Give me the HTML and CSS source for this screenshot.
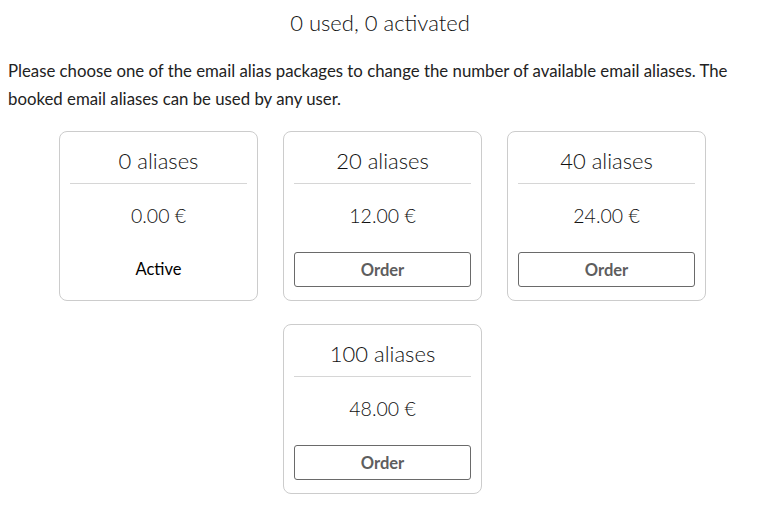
FILE: index.html
```html
<!DOCTYPE html>
<html>
<head>
<meta charset="utf-8">
<link rel="stylesheet" href="styles.css">
</head>
<body>
<h2 class="title">0 used, 0 activated</h2>
<p class="intro">Please choose one of the email alias packages to change the number of available email aliases. The booked email aliases can be used by any user.</p>
<div class="packages">
  <div class="card">
    <div class="name">0 aliases</div>
    <div class="price">0.00 €</div>
    <div class="status">Active</div>
  </div>
  <div class="card">
    <div class="name">20 aliases</div>
    <div class="price">12.00 €</div>
    <button class="order">Order</button>
  </div>
  <div class="card">
    <div class="name">40 aliases</div>
    <div class="price">24.00 €</div>
    <button class="order">Order</button>
  </div>
  <div class="card">
    <div class="name">100 aliases</div>
    <div class="price">48.00 €</div>
    <button class="order">Order</button>
  </div>
</div>
</body>
</html>
```
FILE: styles.css
```css
* { box-sizing: border-box; }
body {
  margin: 8px;
  font-family: Lato, "Open Sans", sans-serif;
  color: #222;
  background: #fff;
}
.title {
  margin: 0;
  text-align: center;
  font-size: 22px;
  font-weight: 300;
  line-height: 30px;
  color: #111;
}
.intro {
  margin: 19px 0 0;
  font-size: 16.8px;
  line-height: 28px;
  font-weight: 400;
  color: #222;
}
.packages {
  margin-top: 18px;
  display: flex;
  flex-wrap: wrap;
  justify-content: center;
  gap: 23px 25px;
  padding-left: 5px;
}
.card {
  width: 199px;
  height: 170px;
  border: 1px solid #ccc;
  border-radius: 8px;
  padding: 0 10px;
  display: flex;
  flex-direction: column;
  align-items: stretch;
  text-align: center;
}
.name {
  font-size: 22px;
  font-weight: 300;
  color: #111;
  padding: 16px 0 9px;
  line-height: 26px;
  border-bottom: 1px solid #d6d6d6;
}
.price {
  font-size: 19.5px;
  font-weight: 300;
  color: #111;
  line-height: 24px;
  padding: 20px 0 0;
  height: 68px;
}
.status {
  font-size: 16.5px;
  font-weight: 400;
  color: #000;
  line-height: 34px;
}
.order {
  height: 35px;
  border: 1px solid #6a6a6a;
  border-radius: 3px;
  background: #fff;
  font-family: inherit;
  font-size: 16.5px;
  font-weight: 700;
  color: #5e5e5e;
}
```
